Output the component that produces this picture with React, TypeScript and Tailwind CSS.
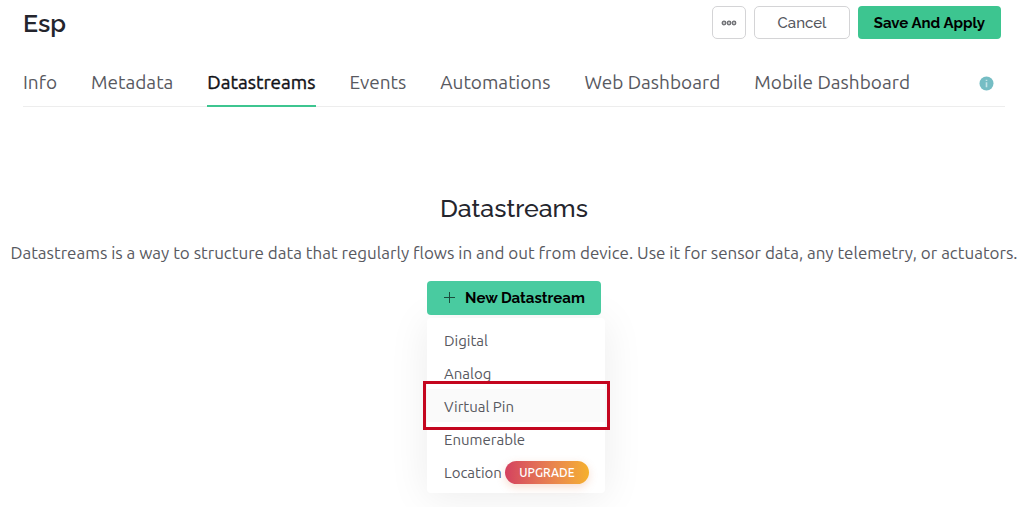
const tabs = ["Info", "Metadata", "Datastreams", "Events", "Automations", "Web Dashboard", "Mobile Dashboard"];
const options = ["Digital", "Analog", "Virtual Pin", "Enumerable", "Location"];

function Header() {
  return (
    <header className="flex items-start justify-between pt-[6px] pr-[19px] pl-[23px]">
      <h1 className="pt-px text-[25px] leading-8 font-semibold text-[#24252d]">Esp</h1>
      <div className="flex gap-2">
        <button type="button" aria-label="More actions" className="flex h-[33px] w-[34px] items-center justify-center rounded-[5px] border border-[#d4d4d6]">
          <svg width="16" height="6" viewBox="0 0 16 6" fill="#c4c4c6" stroke="#6b6c71" strokeWidth="1.2">
            <circle cx="3" cy="3" r="1.8" />
            <circle cx="8" cy="3" r="1.8" />
            <circle cx="13" cy="3" r="1.8" />
          </svg>
        </button>
        <button type="button" className="h-[33px] w-24 rounded-[5px] border border-[#d4d4d6] text-[15px] leading-5 font-medium text-[#56575e]">
          Cancel
        </button>
        <button type="button" className="h-[33px] w-[143px] rounded bg-[#3dc590] text-[15px] leading-5 font-bold text-black">
          Save And Apply
        </button>
      </div>
    </header>
  );
}

function Tabs() {
  return (
    <nav className="mt-5 mr-[15px] ml-[23px] flex items-start justify-between border-b border-[#ededed] pr-[11px] font-['Ubuntu','Noto_Sans',sans-serif]">
      <div className="flex gap-[34px]">
        {tabs.map((tab) => (
          <a
            key={tab}
            href="#"
            aria-current={tab === "Datastreams" ? "page" : undefined}
            className={
              tab === "Datastreams"
                ? "-mb-px h-12 border-b-2 border-[#3dc590] pt-[11px] text-[19px] leading-6 text-[#111217] [-webkit-text-stroke:0.4px_#111217]"
                : "pt-[11px] text-[19px] leading-6 text-[#58595f]"
            }
          >
            {tab}
          </a>
        ))}
      </div>
      <svg className="mt-[17px]" width="15" height="15" viewBox="0 0 15 15" role="img" aria-label="Information">
        <circle cx="7.5" cy="7.5" r="7" fill="#75bdc4" />
        <path d="M7.5 6.3v5M7.5 3.7v1.4" stroke="#c3e3e6" strokeWidth="1.6" />
      </svg>
    </nav>
  );
}

function NewDatastream() {
  return (
    <div className="relative mt-4 w-[174px]">
      <ul className="absolute top-full left-0 mt-[3px] w-[178px] rounded bg-white py-[5px] text-[15px] leading-5 text-[#58595f] shadow-[0_4px_40px_rgba(0,0,0,0.08)]">
        {options.map((option) => (
          <li key={option} className={option === "Virtual Pin" ? "relative bg-[#fafafa]" : ""}>
            <button type="button" className="flex h-[33px] w-full items-center pt-[2px] pl-[17px] text-left">
              {option}
              {option === "Location" && (
                <span className="ml-[3px] flex h-[23px] w-[84px] shrink-0 items-center justify-center rounded-full bg-linear-to-r from-[#d4405f] to-[#f5b02b] text-[12px] font-medium text-white shadow-[0_3px_8px_rgba(225,120,70,0.25)]">
                  UPGRADE
                </span>
              )}
            </button>
            {option === "Virtual Pin" && (
              <span className="pointer-events-none absolute -inset-y-2 -right-[5px] -left-1 border-3 border-[#c4061f]" />
            )}
          </li>
        ))}
      </ul>
      <button
        type="button"
        className="relative flex h-[34px] w-full items-center justify-center gap-[10px] rounded bg-[#49cba0] font-['Raleway','Open_Sans',sans-serif] text-[15px] leading-5 font-bold text-black"
      >
        <svg width="12" height="12" viewBox="0 0 12 12" stroke="#1c4d3d" strokeWidth="1" aria-hidden="true">
          <path d="M6.5 0v11M1 5.5h11" />
        </svg>
        New Datastream
      </button>
    </div>
  );
}

export default function App() {
  return (
    <div className="min-h-screen overflow-hidden bg-white font-['Raleway','Open_Sans',sans-serif]">
      <Header />
      <Tabs />
      <main className="flex flex-col items-center pt-[85px] pl-2">
        <h2 className="text-[25px] leading-8 font-medium text-[#24252d]">Datastreams</h2>
        <p className="mt-[17px] text-center font-['Ubuntu','Noto_Sans',sans-serif] text-[17px] leading-6 text-[#58595f]">
          Datastreams is a way to structure data that regularly flows in and out from device. Use it for sensor data, any telemetry, or actuators.
        </p>
        <div className="font-['Ubuntu','Noto_Sans',sans-serif]">
          <NewDatastream />
        </div>
      </main>
    </div>
  );
}
